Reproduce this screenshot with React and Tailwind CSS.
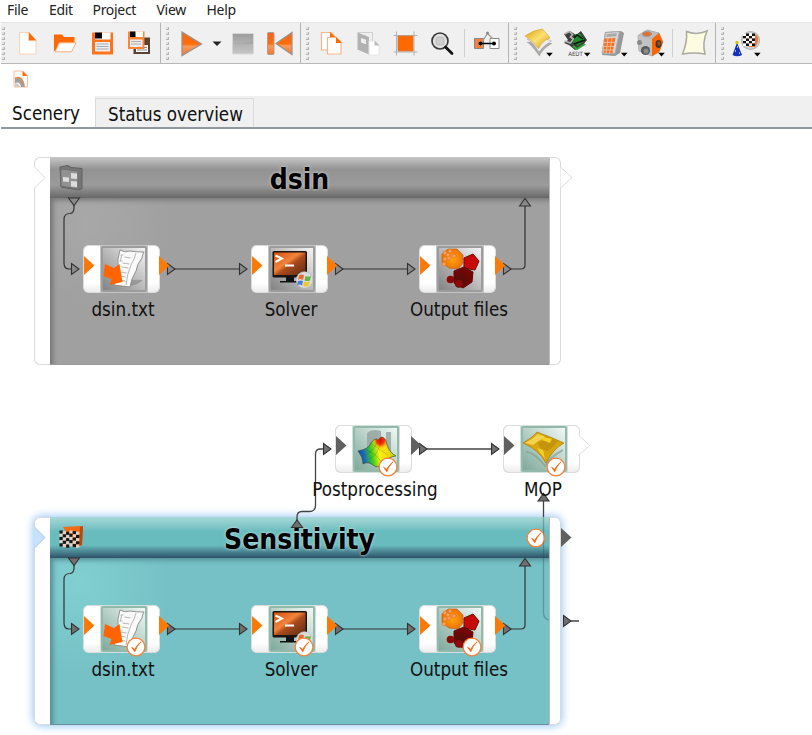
import React from "react";

const UI = "font-['DejaVu_Sans_Condensed','DejaVu_Sans',sans-serif] [font-stretch:condensed]";

function Defs() {
  return (
    <svg className="absolute h-0 w-0" aria-hidden="true">
      <defs>
        <linearGradient id="orange" x1="0" y1="0" x2="0" y2="1">
          <stop offset="0" stopColor="#f9661a" />
          <stop offset=".52" stopColor="#ff6c08" />
          <stop offset=".6" stopColor="#f99a5c" />
          <stop offset="1" stopColor="#f5742c" />
        </linearGradient>
        <linearGradient id="grey" x1="0" y1="0" x2="0" y2="1">
          <stop offset="0" stopColor="#9c9c9c" />
          <stop offset=".5" stopColor="#b2b2b2" />
          <stop offset="1" stopColor="#c6c6c6" />
        </linearGradient>
        <linearGradient id="gold" x1="0" y1="0" x2="1" y2="1">
          <stop offset="0" stopColor="#dc9d0c" />
          <stop offset=".5" stopColor="#fbe175" />
          <stop offset="1" stopColor="#d99a10" />
        </linearGradient>
        <linearGradient id="screen" x1="0" y1="0" x2="1" y2="1">
          <stop offset="0" stopColor="#d4500c" />
          <stop offset=".42" stopColor="#f2843a" />
          <stop offset=".55" stopColor="#a84a1c" />
          <stop offset="1" stopColor="#5a2a16" />
        </linearGradient>
        <radialGradient id="dark" cx=".35" cy=".65">
          <stop offset="0" stopColor="#4a1208" />
          <stop offset="1" stopColor="#740505" />
        </radialGradient>
        <radialGradient id="sun">
          <stop offset="0" stopColor="#ffa40c" />
          <stop offset="1" stopColor="#ef7404" />
        </radialGradient>
        <linearGradient id="rain" x1="0" y1=".6" x2="1" y2=".45">
          <stop offset="0" stopColor="#1524d0" />
          <stop offset=".2" stopColor="#1a6fb0" />
          <stop offset=".38" stopColor="#3fd01a" />
          <stop offset=".55" stopColor="#f7ef12" />
          <stop offset=".75" stopColor="#f5d80e" />
          <stop offset="1" stopColor="#6fcf1c" />
        </linearGradient>
        <radialGradient id="peak">
          <stop offset="0" stopColor="#e80606" />
          <stop offset=".5" stopColor="#f53a08" />
          <stop offset="1" stopColor="#fbb010" stopOpacity="0" />
        </radialGradient>
        <clipPath id="hill"><path d="M6 26q11-2 13-8 4-6 7-3l3-3q5 0 6 8 3 8 9 11-9 1-14 8-5 5-9 1-5-4-10-1 0-7-5-13z" /></clipPath>
      </defs>
    </svg>
  );
}

function Cell({ x, children }) {
  return (
    <button className="block h-10 w-[37px] shrink-0">
      <svg width="37" height="40" viewBox={`${x} 23 37 40`}>{children}</svg>
    </button>
  );
}

function Handle({ first }) {
  return (
    <div className={"flex h-full shrink-0 flex-col items-start gap-[2px] pt-[4px] " + (first ? "w-[8.5px] pl-[1px]" : "w-[11.5px] pl-[4.5px]")}>
      {[0, 1, 2, 3, 4, 5, 6].map((i) => (
        <span key={i} className="h-[3px] w-[3px] border-b border-r border-[#b4b4b4] bg-[#e0e0e0]" />
      ))}
    </div>
  );
}

function Group({ width, children, first, last }) {
  return (
    <div className={"flex h-10 shrink-0 items-start " + width + (last ? "" : " border-r border-[#b5b5b5]")}>
      <Handle first={first} />
      {children}
    </div>
  );
}

const ThinSep = () => <div className="mt-1.5 flex h-7 w-2 shrink-0 justify-center"><span className="w-px bg-[#cfcfcf]" /></div>;
const Drop = ({ x, y = 52.8 }) => <path d={`M${x - 3.3} ${y}h6.6l-3.3 3.6z`} fill="#000" />;

function Toolbar() {
  return (
    <div className="ml-px flex h-[41px] shrink-0 border-b border-[#b8b8b8] bg-[#f0f0f0]">
      <Group width="w-[160px]" first>
        <Cell x={10}>
          <path d="M19.5 32.5H29l7 8V54H19.5z" fill="#fff" stroke="#fbd3b8" />
          <path d="M28.7 32l7.6 8.5h-7.6z" fill="#ff6a00" />
        </Cell>
        <Cell x={47}>
          <path d="M54 34.5h8l2 2.5h10.5v6H59l-3.5 8H54z" fill="#ff6a00" />
          <path d="M59.5 42.8H76l-4.5 9H55z" fill="#fff" stroke="#fbae80" />
        </Cell>
        <Cell x={84}>
          <path d="M92 32.5h21V54.5H92z" fill="#ff741a" />
          <path d="M95 32.5h15.5v7H95z" fill="#fff" /><path d="M95 32.5h7v6h-7z" fill="#000" />
          <path d="M95 42h15v9.5H95z" fill="#eee" />
          <path d="M96.5 44h12m-12 2.5h12m-12 2.5h12" stroke="#aaa" />
        </Cell>
        <Cell x={121}>
          <path d="M133.5 37.5h16.5V54h-16.5z" fill="#594335" /><path d="M136 45h12v7h-12z" fill="#fff" />
          <path d="M137 47.5h10m-10 2.5h10" stroke="#888" />
          <path d="M128 31.5h16.5V49H128z" fill="#ff8436" />
          <path d="M130 31.5h13v5.5h-13z" fill="#fff" /><path d="M130 31.5h5.5V37H130z" fill="#000" />
          <path d="M130 39.5h12.5v7.5H130z" fill="#eee" /><path d="M131 41.5h10m-10 2.5h10" stroke="#aaa" />
        </Cell>
      </Group>
      <Group width="w-[140px]">
        <Cell x={173}>
          <path d="M182 32l19.5 12L182 55.500z" fill="url(#orange)" stroke="#9a928e" strokeWidth="1.3" />
        </Cell>
        <div className="h-10 w-[15px] shrink-0 pt-[18px]"><svg width="15" height="8"><path d="M2.5 .5h9L7 5z" fill="#222" /></svg></div>
        <Cell x={225}>
          <rect x="232.500" y="33.500" width="21" height="20.500" rx="1" fill="url(#grey)" stroke="#d7d7d7" />
          <path d="M233 44h20v-3q-10 3-20 3" fill="#999" opacity=".4" />
        </Cell>
        <Cell x={262}>
          <rect x="267.500" y="32.500" width="6.500" height="22" rx="1" fill="url(#orange)" stroke="#b09c90" />
          <path d="M292 32.500V54.500L276 43.500z" fill="url(#orange)" stroke="#9a928e" strokeWidth="1.2" />
        </Cell>
      </Group>
      <Group width="w-[208px]">
        <Cell x={313}>
          <path d="M321.500 32.500h9.500l5 5V50h-14.500z" fill="#fff" stroke="#fab48a" strokeWidth="1.2" />
          <path d="M330 32l6 6h-6z" fill="#ff6a00" />
          <path d="M327.500 37.500h9l4.500 5V54h-13.500z" fill="#fff" stroke="#fab48a" strokeWidth="1.2" />
          <path d="M336 37l6 6h-6z" fill="#ff6a00" />
        </Cell>
        <Cell x={350}>
          <path d="M358 32.500h14.500v17l-4-2-10-14z" fill="#efefef" stroke="#d0d0d0" />
          <path d="M357.500 32.500l11.500 4.500v17.500l-11.500-5z" fill="#b2b2b2" />
          <path d="M361 38l5 1.700v4.500l-5-1.700z" fill="#eee" />
          <path d="M369 41h6l4 4v10h-10z" fill="#fff" stroke="#e4e4e4" /><path d="M374.500 40.500l5 5h-5z" fill="#bbb" />
        </Cell>
        <Cell x={387}>
          <path d="M393.500 35.500h24M393.500 52h24M396.500 31.500v24M414 31.500v24" stroke="#b2b2b2" />
          <path d="M398 36h15v15h-15z" fill="#ff6a00" stroke="#d77838" strokeWidth=".8" />
        </Cell>
        <Cell x={424}>
          <circle cx="440" cy="41" r="8" fill="#e3e3e3" stroke="#3a3a3a" strokeWidth="1.7" />
          <rect x="436" y="37" width="8" height="8" rx="2" fill="#cecece" stroke="#bbb" />
          <path d="M445.500 47l6.500 6.500" stroke="#111" strokeWidth="2.800" strokeLinecap="round" />
        </Cell>
        <ThinSep />
        <Cell x={469}>
          <path d="M474.500 38.500h9v10h-9z" fill="#f5823c" stroke="#888" /><path d="M490 38.500h9v10h-9z" fill="#fff" stroke="#888" />
          <path d="M481 43.500l6.500-10 5 5" fill="none" stroke="#999" strokeWidth="1.200" />
          <circle cx="487.500" cy="33" r="1.500" fill="#888" />
          <path d="M480 43.500h14" stroke="#000" strokeWidth="1.500" /><circle cx="480.500" cy="43.500" r="2" /><circle cx="494" cy="43.500" r="2" />
        </Cell>
      </Group>
      <Group width="w-[207px]">
        <Cell x={521}>
          <path d="M526.500 42q5 3 13 14.500 3-8 13-13l-11-3z" fill="#aaa" />
          <path d="M527 39q6 3 12 13 5-7 12.500-11l-8-3z" fill="#eee" stroke="#aaa" strokeWidth=".6" />
          <path d="M525 36q8-6 17.500-7 4 4 7.500 9-7 2-11.500 10.500Q532 40 525 36z" fill="url(#gold)" stroke="#d8a62a" strokeWidth=".6" />
          <Drop x={549.5} />
        </Cell>
        <Cell x={558}>
          <path d="M564 34l6-3 6 4 5-4 6 9-5 6-7 4-6-5-5-2 4-3z" fill="#3b403d" />
          <path d="M564.500 34l5-2.500 3 3-2 2.500 3 2-3 4-6-2" fill="none" stroke="#b5b5b5" strokeWidth="1.600" />
          <path d="M575 34.500l5-1 5 7-7 5-5-3z" fill="#1f8b2c" />
          <path d="M574 38l3-3 6 4M574 44l11-4" fill="none" stroke="#111" strokeWidth="1.500" />
          <path d="M573 46l4 3 8-5" fill="none" stroke="#29a838" strokeWidth="2" />
          <text x="568.300" y="56" textLength="14.500" lengthAdjust="spacingAndGlyphs" fontSize="6" fontFamily="DejaVu Sans" fill="#444">AEDT</text>
          <Drop x={587.200} />
        </Cell>
        <Cell x={595}>
          <path d="M605 32l16-1 3 2-4 20-5 3-13-1z" fill="#999" /><path d="M605.500 32.500l14-1-4.500 22-13-.5z" fill="#d6d6d6" stroke="#aaa" />
          <path d="M607 34l10-.8-.8 3-10 .8z" fill="#aaa" />
          <path d="M604.500 38.500l11-.5-3 15-9-.5z" fill="#f47226" />
          <path d="M603 42.500l12-.2m-13 4l12 .2m-12 3.500h11M608 38l-2 16m6-16l-2.500 16" stroke="#fac9a8" strokeWidth=".8" />
          <Drop x={624.200} />
        </Cell>
        <Cell x={632}>
          <path d="M638 35.500l9-5.500 12 3 4 9-4 10-7 4-13-5z" fill="#a0a0a0" stroke="#999" strokeWidth=".7" />
          <path d="M638 35.500l9-5.500 12 3-7 6z" fill="#bdbdbd" />
          <path d="M638 35.500l14 3.500v17l-13-5z" fill="#c2c2c2" />
          <path d="M652 39l7-6 4 9-4 10-7 4z" fill="#fb6500" />
          <ellipse cx="658.500" cy="44" rx="3" ry="4" fill="#4b342a" /><ellipse cx="659" cy="43.500" rx="1.600" ry="2.200" fill="#8d5028" />
          <ellipse cx="647" cy="34" rx="4.500" ry="2.300" fill="#eb6c2a" stroke="#999" />
          <circle cx="645.500" cy="50.500" r="4.600" fill="#5a5a5a" /><circle cx="646" cy="51" r="2.600" fill="#8b8b8b" />
          <circle cx="639.500" cy="42.500" r="2.500" fill="#888" /><Drop x={661.500} />
        </Cell>
        <ThinSep />
        <Cell x={677}>
          <path d="M686.500 31.500q10 4 20.500-.5-5 12-2 23-11-2-22.500 0 5-12 4-22.500z" fill="#fdfce3" stroke="#aaaaa0" strokeWidth="1.500" />
        </Cell>
      </Group>
      <Group width="w-[95px]" last>
        <Cell x={728}>
          <circle cx="750.500" cy="40.500" r="9" fill="#cfcfcf" stroke="#b4b4b4" strokeWidth="1.200" />
          <path d="M749 35h8q3 6-2 12h-6z" fill="#e9793a" />
          {[0, 1, 2, 3, 4].map((r) => [0, 1, 2, 3].map((c) => <rect key={r + "-" + c} x={743 + c * 3} y={33.500 + r * 2.500} width="3" height="2.500" fill={(r + c) % 2 ? "#111" : "#fff"} />))}
          <path d="M737 42.500l5 12.500q-5 2.500-9.500 0z" fill="#1230b8" /><circle cx="737" cy="42.500" r="1.700" fill="#d4c414" />
          <path d="M737 47h1m-3 4h1m3 2h1" stroke="#d9dfa8" strokeWidth="1.500" />
          <Drop x={757.300} />
        </Cell>
      </Group>
    </div>
  );
}

function Check() {
  return (
    <svg width="20" height="20" viewBox="0 0 20 20" className="block">
      <circle cx="10" cy="10" r="8.900" fill="#fff" stroke="#f3833f" strokeWidth="1.300" />
      <path d="M5.600 10.200l3.200 4.600q1.800-5.400 6.200-10-4.300 3.400-6.400 7.500z" fill="#f8640c" stroke="#f8640c" strokeWidth=".7" />
    </svg>
  );
}

/* Tile artwork, drawn on a 47 x 47 field */
const art = {
  text: (
    <>
      <path d="M18 39q10-5 25-4-5 5-14 6z" fill="#777" opacity=".5" />
      <path d="M20 5q5 3 10 1 6 1 14 1-2 3-2 6-5 6-6 13-5 8-6 16-8-1-16-2 4-11 4-17-1-9 2-18z" fill="#f9f9f9" stroke="#888" strokeWidth=".9" />
      <path d="M36 8q-1 5-5 12-4 9-5 20M21.500 10l-1 6m0-6l3 0m-4 6l3 0m2-4l6 1m-8 5l7 1m-8 3l7 1m-8 4l6 1m-7 3l6 1m-6 3l6 1" fill="none" stroke="#b0b0b0" strokeWidth=".9" />
      <path d="M5 19l9 4 5.500-4 3 18-13 3 2-6-8-3z" fill="#ff6400" />
    </>
  ),
  solver: (
    <>
      <path d="M18 32h8v4h6v1.500H12V36h6z" fill="#111" />
      <rect x="4.500" y="6" width="34.500" height="26.500" rx="1.500" fill="#1b1411" />
      <rect x="6" y="7.500" width="31.500" height="22.500" fill="url(#screen)" />
      <path d="M7.500 10.500l6.500 3-6.500 3.500" fill="none" stroke="#fff" strokeWidth="2" /><path d="M17 20.500h9" stroke="#fff" strokeWidth="2" />
    </>
  ),
  output: (
    <>
      <path d="M6 9l6-5 9 0 6 6 0 8-5 6-9-1-7-5z" fill="url(#sun)" stroke="#b96520" strokeWidth=".7" />
      {[[9, 8], [14, 6], [18, 11], [9, 14], [8, 19], [13, 13], [12, 10]].map(([x, y]) => <circle key={x + "," + y} cx={x} cy={y} r="2" fill="#fb9f5a" stroke="#e0701c" strokeWidth=".6" />)}
      <path d="M28 13l9-4 6 7-4 9-11-2z" fill="#c50a07" stroke="#6f0c04" />
      <path d="M18 26l10-4 9 5-1 10-9 6-9-5z" fill="url(#dark)" stroke="#5c0b04" />
      <circle cx="14.500" cy="34.500" r="3.800" fill="#8a0a08" /><circle cx="23" cy="38.500" r="4" fill="#8f0b0b" stroke="#5c0b04" strokeWidth=".6" />
    </>
  ),
  surface: (
    <>
      <path d="M15 8q5-5 14-2V26H15zM34 7h5v22h-5z" fill="#929d9a" opacity=".75" />
      <g clipPath="url(#hill)">
        <rect x="4" y="10" width="42" height="36" fill="url(#rain)" />
        <ellipse cx="28.500" cy="15" rx="8" ry="9" fill="url(#peak)" />
      </g>
      <path d="M6 26q11-2 13-8 4-6 7-3l3-3q5 0 6 8 3 8 9 11-9 1-14 8-5 5-9 1-5-4-10-1 0-7-5-13z" fill="none" stroke="#39452d" strokeWidth=".6" />
      <path d="M10 31q11-2 16-16M17 34q9-3 12-19m-15 10q10 3 16 13m-11-20q6 5 17 12" fill="none" stroke="#253922" strokeWidth=".4" opacity=".5" />
    </>
  ),
  mop: (
    <>
      <path d="M6 27q8 0 19 14 5-9 18-16" fill="none" stroke="#7f9c8c" strokeWidth="2" opacity=".6" />
      <path d="M3 18Q12 13 17 7q14 5 27 11-11 6-18 20-7-13-23-20z" fill="#d8a60d" stroke="#a97c07" strokeWidth=".7" />
      <path d="M5 18Q13 14 18 9l8 3q-7 3-13 8z" fill="#f2d34d" />
      <path d="M18 18l6-3 1-4 13 5-6 7-5 3-7-3z" fill="#c4940a" /><path d="M24 12l8 2-2 4-8-3zM17 23l6 2 2 9q-5-6-8-11z" fill="#f4d028" />
    </>
  ),
};

function Node({ x, y, kind, label, teal, done, color = "#fb7a06", end, windows }) {
  return (
    <div className="absolute h-[48px] w-[77px]" style={{ left: x, top: y }}>
      <div className={"flex h-full w-full justify-between rounded-[6px] " + (teal ? "bg-[#d3e2dc]" : "bg-[#c4c4c4]")}>
        <div className="flex h-full w-[17px] items-center rounded-l-[6px] border border-r-0 border-[#dcdcdc] bg-linear-to-b from-white from-80% to-[#ededed] pb-[7px]">
          <svg width="11" height="19" className="shrink-0"><path d="M0 0v19L10.500 9.500z" fill={color} /></svg>
        </div>
        <div className={"mt-px h-[46px] w-[46px] rounded-[2px] border-2 " + (teal ? "border-[#93b9ab] bg-linear-to-bl from-[#f0f8f5] to-[#7fa99b]" : "border-[#9c9c9c] bg-linear-to-bl from-[#f4f4f4] to-[#838383]")}>
          <svg width="45" height="45" viewBox="3 3 45 45">{art[kind]}
            {windows && <g><circle cx="36.500" cy="35" r="8.300" fill="#d8dde0" stroke="#bbb" strokeWidth=".6" /><path d="M31 30.500q3-2 5 0l-1 4.500q-3-2-5 0z" fill="#e96a32" /><path d="M37.500 31q3 1 5.500 0l-1 4.500q-3 1-5.500 0z" fill="#65b642" /><path d="M30 36q3-1 5 0l-1 4.500q-3-2-5 0z" fill="#477be0" /><path d="M36 36.500q3 1 5.500 0l-1 4.500q-3 1-5.500 0z" fill="#f1c92b" /></g>}
          </svg>
        </div>
        <div className="h-full w-[12px] rounded-r-[6px] border border-l-0 border-[#dcdcdc] bg-linear-to-b from-white from-80% to-[#ededed]" />
      </div>
      {end ? (
        <svg width="13" height="21" className="absolute left-[75px] top-[10px]"><path d="M.5 0L11.500 10.500.5 20.500" fill="#fff" stroke="#dadada" /></svg>
      ) : (
        <svg width="11" height="19" className="absolute left-[76px] top-[11px]"><path d="M0 0v19L10.500 9.500z" fill={color} /></svg>
      )}
      {done && <div className="absolute left-[43px] top-[32px]"><Check /></div>}
      <div className={"absolute left-[-30px] top-[53px] w-[140px] whitespace-nowrap text-center text-[18.670px] leading-6 text-[#111] " + UI}>{label}</div>
    </div>
  );
}

function Panel({ y, title, teal }) {
  return (
    <div className="absolute left-[34px] h-[208px] w-[527px]" style={{ top: y }}>
      <div className={"flex h-full w-full rounded-[7px] " + (teal ? "shadow-[0_0_8px_1px_#95c5f6]" : "")}>
        <div className="w-[16px] shrink-0 rounded-l-[6px] border border-r-0 border-[#dadada] bg-white" />
        <div className={"flex flex-1 flex-col border-b " + (teal ? "border-[#6b8f94] bg-[#75c1c5]" : "border-[#999] bg-[#a0a0a0]")}>
          <div className={"relative flex h-[41px] shrink-0 items-center justify-center bg-linear-to-b " + (teal ? "from-[#a8d8d7] via-[#69bcbe] via-35% to-[#69bcbe] to-68%" : "from-[#c8c8c8] via-[#939393] via-30% to-[#9b9b9b] to-68%")}>
            <div className={"absolute inset-x-0 bottom-0 h-[13px] bg-linear-to-b from-transparent " + (teal ? "to-[#2d5168]" : "to-[#686868]")} />
            <div className="absolute left-[9px] top-[8px]">
              {teal ? (
                <svg width="25" height="26">
                  <path d="M4 2l20-1-1 19-6 2z" fill="#f36a12" /><path d="M21 2l3-1-1 19-3 1z" fill="#b14b10" />
                  {[0, 1, 2, 3, 4].map((r) => [0, 1, 2, 3, 4, 5].map((c) => <rect key={r + "" + c} x={0.5 + c * 3.300} y={5.500 + r * 3.200 + (c % 3) * 0.6} width="3.300" height="3.200" fill={(r + c) % 2 ? "#e9cfc0" : "#161616"} />))}
                </svg>
              ) : (
                <svg width="25" height="26">
                  <path d="M1 2l8-1.500 3 2 11 1 0 20-3 1.500L2 22z" fill="#777" stroke="#606060" /><path d="M2 4l17 2v18L2 21z" fill="#929292" stroke="#707070" />
                  <path d="M12 8l6 .5V14l-6-.5zM4 12l6 .5V17l-6-.5zM12 16l6 .5V22l-6-.5z" fill="#ddd" />
                </svg>
              )}
            </div>
            <h2 className={"relative top-[2px] text-[28px] font-bold leading-8 text-black [text-shadow:0_0_3px_rgba(235,235,235,.9)] " + UI}>{title}</h2>
            {teal && <div className="absolute right-[3px] top-[11px]"><Check /></div>}
          </div>
          <div className={"flex-1 " + (teal ? "bg-[radial-gradient(circle_at_30px_25px,#82cfd2_0,#75c1c5_90px)] shadow-[inset_5px_4px_5px_-2px_#548c93]" : "bg-[radial-gradient(circle_at_40px_25px,#a8a8a8_0,#a0a0a0_80px)] shadow-[inset_5px_4px_5px_-2px_#747474]")} />
        </div>
        <div className="w-[12px] shrink-0 rounded-r-[6px] border border-l-[#bbb] border-[#dadada] bg-white" />
      </div>
      <svg width="13" height="22" className="absolute left-[-1px] top-[10px]"><path d="M0 0h1.500L12 10.500 1.500 21H0z" fill={teal ? "#c6e1fb" : "#fff"} /><path d="M1.500 0L12 10.500 1.500 21" fill="none" stroke={teal ? "#a9c9e6" : "#dadada"} /></svg>
      {teal
        ? <svg width="11" height="20" className="absolute left-[527px] top-[11px]"><path d="M0 0v19L10.500 9.500z" fill="#606060" /></svg>
        : <svg width="13" height="22" className="absolute left-[525px] top-[10px]"><path d="M1.500 0L13 10.500 1.500 21" fill="#fff" stroke="#dadada" /></svg>}
    </div>
  );
}

const Tri = ({ x, y, dir = "r", solid }) => (
  <path transform={`translate(${x} ${y}) rotate(${dir === "u" ? -90 : dir === "d" ? 90 : 0})`} d="M0-5.500L7.500 0 0 5.500z" fill={solid ? "#707070" : "#8a8a8a"} stroke="#333" strokeWidth="1.100" />
);

function InnerEdges({ dy, solid }) {
  return (
    <g transform={`translate(0 ${dy})`}>
      <path d="M74 203v5q0 5-4 5.500-6 0-6 6V263q0 6 5 6h3M174 269h66M342 269h66M510 269h11q4 0 4-4V204" fill="none" stroke="#333" strokeWidth="1.200" />
      <Tri x={74} y={198} dir="d" solid={solid} /><Tri x={71.500} y={269} solid={solid} />
      <Tri x={239.500} y={269} solid={solid} /><Tri x={407.500} y={269} solid={solid} /><Tri x={525} y={206} dir="u" solid={solid} />
      <Tri x={167.500} y={269} solid={solid} /><Tri x={335.500} y={269} solid={solid} /><Tri x={503.500} y={269} solid={solid} />
    </g>
  );
}

export default function App() {
  return (
    <div className="relative flex h-[735px] w-[812px] flex-col overflow-hidden bg-white">
      <Defs />
      <nav className="flex h-[22px] shrink-0 items-start gap-[21px] pl-[7px] pt-[1px] font-['Noto_Sans',sans-serif] text-[14px] leading-[18px] tracking-[-0.3px] text-[#222]">
        <span className="w-[21px]">File</span><span className="w-[22.500px]">Edit</span><span className="w-[43px]">Project</span><span className="w-[29px]">View</span><span>Help</span>
      </nav>
      <div className="h-px shrink-0 bg-[#e5e5e5]" />
      <Toolbar />
      <div className="h-8 shrink-0 pl-[13px] pt-[6px]">
        <svg width="16" height="19">
          <path d="M1 1h9l4.500 4.500V17H1z" fill="#fff" stroke="#f9bd98" /><path d="M9.500 1l5 5h-5z" fill="#ff6a00" />
          <path d="M2 8q7-4 10 9H8Q7 11 2 13z" fill="#a0a0a0" /><path d="M2 8q7-3 9 7" fill="none" stroke="#f38743" strokeWidth="1.300" /><path d="M2 13q4 0 5 4H2z" fill="#ccc" />
        </svg>
      </div>
      <div className={"ml-px flex h-[33px] shrink-0 items-stretch border-b-2 border-[#92989b] bg-[#f0f0f0] text-[18.670px] leading-6 text-[#111] " + UI}>
        <div className="w-[94px] bg-white pl-[11px] pt-[6px]">Scenery</div>
        <div className="mt-[2px] w-[159px] whitespace-nowrap border border-b-0 border-[#dadada] pl-[12px] pt-[4px]">Status overview</div>
      </div>
      <Panel y={157} title="dsin" />
      <Panel y={517} title="Sensitivity" teal />
      <svg width="812" height="735" className="pointer-events-none absolute left-0 top-0">
        <InnerEdges dy={0} /><InnerEdges dy={360} solid />
        <path d="M297 521v-4q0-5.500 5-5.500h7q6.500 0 6.500-6V454q0-5 5-5h3M426 449h66M543.500 501v16M570 621h9" fill="none" stroke="#444" strokeWidth="1.300" />
        <path d="M543.500 517v96q0 5 5 7" fill="none" stroke="#244c50" strokeWidth="1.300" opacity=".35" />
        <Tri x={297} y={527.500} dir="u" solid /><Tri x={323.500} y={449} solid /><Tri x={419.500} y={449} solid /><Tri x={491.500} y={449} solid />
        <Tri x={543.500} y={501} dir="u" solid /><Tri x={563.500} y={621} solid />
      </svg>
      <Node x={83} y={245} kind="text" label="dsin.txt" />
      <Node x={251} y={245} kind="solver" label="Solver" windows />
      <Node x={419} y={245} kind="output" label="Output files" />
      <Node x={335} y={425} kind="surface" label="Postprocessing" teal done color="#606060" />
      <Node x={503} y={425} kind="mop" label="MOP" teal done color="#606060" end />
      <Node x={83} y={605} kind="text" label="dsin.txt" teal done />
      <Node x={251} y={605} kind="solver" label="Solver" teal done windows />
      <Node x={419} y={605} kind="output" label="Output files" teal done />
    </div>
  );
}
